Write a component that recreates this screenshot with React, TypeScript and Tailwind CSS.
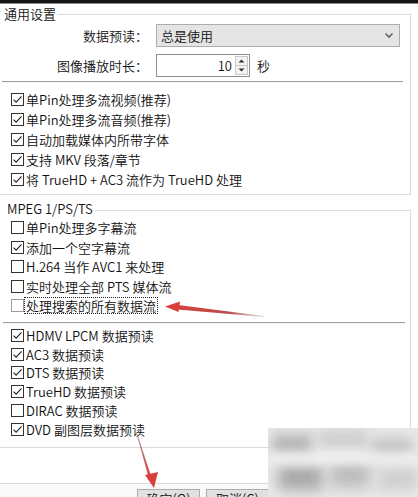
import React from "react";

function Box({ checked, light }: { checked: boolean; light?: boolean }) {
  return (
    <span
      className={`flex h-[13px] w-[13px] shrink-0 items-center justify-center border bg-white ${
        light ? "border-[#9a9a9a]" : "border-[#333333]"
      }`}
    >
      {checked && (
        <svg width="11" height="11" viewBox="0 0 11 11">
          <path d="M1.6 5.6 L4.1 8.1 L9.6 2.4" fill="none" stroke="#222" strokeWidth="1.1" />
        </svg>
      )}
    </span>
  );
}

function Row({
  label,
  checked,
  h,
  focus,
}: {
  label: string;
  checked: boolean;
  h: string;
  focus?: boolean;
}) {
  return (
    <div className={`flex items-center pl-[14px] ${h}`}>
      <Box checked={checked} light={focus} />
      <span
        className={`ml-[1px] px-[1px] leading-[15px] whitespace-nowrap ${
          focus ? "outline outline-1 outline-dotted outline-[#222]" : ""
        }`}
      >
        {label}
      </span>
    </div>
  );
}

export default function App() {
  const g1 = [
    "单Pin处理多流视频(推荐)",
    "单Pin处理多流音频(推荐)",
    "自动加载媒体内所带字体",
    "支持 MKV 段落/章节",
    "将 TrueHD + AC3 流作为 TrueHD 处理",
  ];
  const g2a: [string, boolean][] = [
    ["单Pin处理多字幕流", false],
    ["添加一个空字幕流", true],
    ["H.264 当作 AVC1 来处理", false],
    ["实时处理全部 PTS 媒体流", false],
  ];
  const g2b: [string, boolean][] = [
    ["HDMV LPCM 数据预读", true],
    ["AC3 数据预读", true],
    ["DTS 数据预读", true],
    ["TrueHD 数据预读", true],
    ["DIRAC 数据预读", false],
    ["DVD 副图层数据预读", true],
  ];

  return (
    <div className="relative h-[497px] w-[418px] overflow-hidden bg-white font-['Noto_Sans_CJK_SC','Microsoft_YaHei',sans-serif] text-[13px] font-[350] text-[#111]">
      <div className="h-[3px] bg-[#151515]" />
      <div className="h-px bg-[#8a8a8a]" />

      {/* Group 1 */}
      <div className="-ml-[3px] w-[414px]">
        <div className="flex h-[20px] items-start">
          <span className="pl-[7px] pr-[2px] leading-[20px]">通用设置</span>
          <div className="mt-[10px] h-[10px] flex-1 border-t border-r border-[#dcdcdc]" />
        </div>
        <div className="border-r border-b border-[#dcdcdc] pb-[5px]">
          <div className="flex h-[23px] items-center">
            <span className="w-[151px] text-right">数据预读：</span>
            <div className="ml-[8px] flex h-[23px] w-[244px] items-center justify-between border border-[#adadad] bg-[#e5e5e5] pl-[4px] pr-[5px]">
              <span>总是使用</span>
              <svg width="10" height="7" viewBox="0 0 10 7">
                <path d="M1.5 1.5 L5 5 L8.5 1.5" fill="none" stroke="#666" strokeWidth="1.6" />
              </svg>
            </div>
          </div>
          <div className="mt-[7px] flex h-[23px] items-center">
            <span className="w-[151px] text-right">图像播放时长：</span>
            <div className="ml-[8px] flex h-[23px] w-[94px] items-stretch border border-[#8f8f8f] bg-white">
              <span className="flex-1 pr-[3px] text-right leading-[21px]">10</span>
              <div className="my-[1px] mr-[1px] flex w-[13px] flex-col border border-[#c8c8c8] bg-[#f3f3f3]">
                <div className="flex flex-1 items-center justify-center border-b border-[#c8c8c8]">
                  <svg width="7" height="4" viewBox="0 0 7 4">
                    <path d="M0.5 3.5 L3.5 0.5 L6.5 3.5 Z" fill="#333" />
                  </svg>
                </div>
                <div className="flex flex-1 items-center justify-center">
                  <svg width="7" height="4" viewBox="0 0 7 4">
                    <path d="M0.5 0.5 L3.5 3.5 L6.5 0.5 Z" fill="#333" />
                  </svg>
                </div>
              </div>
            </div>
            <span className="ml-[7px]">秒</span>
          </div>
          <div className="ml-[5px] mt-[4px] w-[401px]">
            <div className="h-px bg-[#a0a0a0]" />
            <div className="h-px bg-[#f4f4f4]" />
          </div>
          <div className="mt-[7px]">
            {g1.map((l) => (
              <Row key={l} label={l} checked h="h-[19.8px]" />
            ))}
          </div>
        </div>
      </div>

      {/* Group 2 */}
      <div className="-ml-[3px] mt-[5px] w-[414px]">
        <div className="flex h-[18px] items-start">
          <span className="pl-[10px] pr-[2px] leading-[18px]">MPEG 1/PS/TS</span>
          <div className="mt-[10px] h-[8px] flex-1 border-t border-r border-[#dcdcdc]" />
        </div>
        <div className="border-r border-b border-[#dcdcdc] pb-[8px]">
          {g2a.map(([l, c]) => (
            <Row key={l} label={l} checked={c} h="h-[19.5px]" />
          ))}
          <Row label="处理搜索的所有数据流" checked={false} h="h-[19.5px]" focus />
          <div className="ml-[6px] mt-[7px] w-[402px]">
            <div className="h-px bg-[#a0a0a0]" />
            <div className="h-px bg-[#f4f4f4]" />
          </div>
          <div className="mt-[1.5px]">
            {g2b.map(([l, c]) => (
              <Row key={l} label={l} checked={c} h="h-[18.8px]" />
            ))}
          </div>
        </div>
      </div>

      {/* Bottom */}
      <div className="h-[35px]" />
      <div className="h-px bg-[#dcdcdc]" />
      <div className="flex gap-[6px] bg-[#f9f9f9] pl-[137px] pt-[5px]">
        <div className="h-[24px] w-[63px] border border-[#adadad] bg-[#e1e1e1] pt-[1px] text-center leading-[15px]">
          确定(O)
        </div>
        <div className="h-[24px] w-[63px] border border-[#adadad] bg-[#e1e1e1] pt-[1px] text-center leading-[15px]">
          取消(C)
        </div>
      </div>

      {/* blurred watermark */}
      <div className="absolute left-[268px] top-[428px] h-[69px] w-[150px] overflow-hidden bg-[#e9e9e9]">
        <div className="absolute left-[4px] top-[6px] h-[22px] w-[40px] bg-[#b8b8b8] blur-[6px]" />
        <div className="absolute left-[50px] top-[2px] h-[18px] w-[50px] bg-[#cfcfcf] blur-[6px]" />
        <div className="absolute left-[104px] top-[10px] h-[20px] w-[40px] bg-[#c4c4c4] blur-[6px]" />
        <div className="absolute left-[10px] top-[38px] h-[24px] w-[45px] bg-[#a8a8a8] blur-[7px]" />
        <div className="absolute left-[62px] top-[34px] h-[26px] w-[40px] bg-[#bdbdbd] blur-[7px]" />
        <div className="absolute left-[110px] top-[40px] h-[22px] w-[40px] bg-[#d0d0d0] blur-[6px]" />
        <div className="absolute left-[0px] top-[25px] h-[10px] w-[150px] bg-[#f2f2f2] blur-[5px]" />
      </div>

      {/* red arrows */}
      <svg className="pointer-events-none absolute left-0 top-0" width="418" height="497" viewBox="0 0 418 497">
        <defs>
          <linearGradient id="a1" x1="178" y1="308" x2="264" y2="317" gradientUnits="userSpaceOnUse">
            <stop offset="0" stopColor="#d8403a" />
            <stop offset="0.6" stopColor="#b8504c" />
            <stop offset="1" stopColor="#b0a0a0" stopOpacity="0.4" />
          </linearGradient>
          <linearGradient id="a2" x1="137" y1="436" x2="150" y2="475" gradientUnits="userSpaceOnUse">
            <stop offset="0" stopColor="#8a7070" stopOpacity="0.7" />
            <stop offset="1" stopColor="#d8403a" />
          </linearGradient>
        </defs>
        <polygon points="264,316 178,305 177.5,309.5 264,317" fill="url(#a1)" />
        <polygon points="165,306.5 180,301.5 178.5,312" fill="#d8403a" />
        <polygon points="137,436 148,475 150.5,474.5 138,436" fill="url(#a2)" />
        <polygon points="154,488 145,475 158,472" fill="#d8403a" />
      </svg>
    </div>
  );
}
